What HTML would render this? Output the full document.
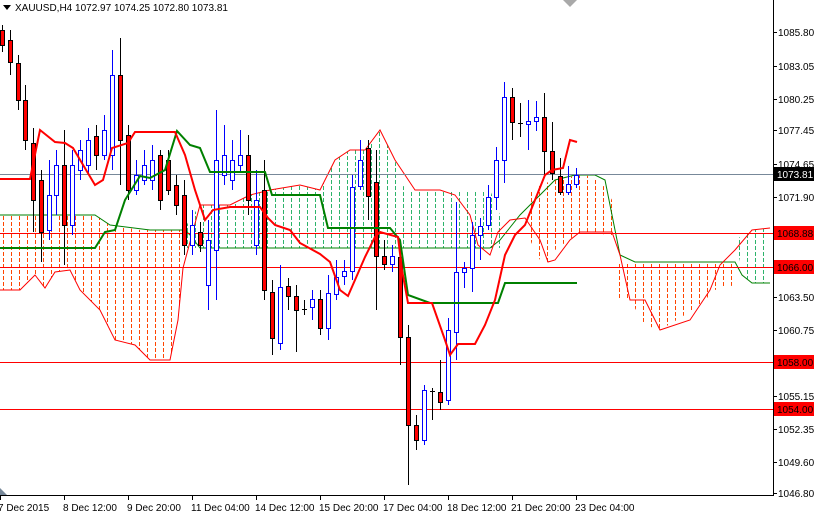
<!DOCTYPE html>
<html><head><meta charset="utf-8"><style>
body{margin:0;width:814px;height:516px;overflow:hidden;background:#fff;font-family:"Liberation Sans",sans-serif}
svg{display:block}
text{font-family:"Liberation Sans",sans-serif;font-size:10px}
</style></head><body>
<svg width="814" height="516" viewBox="0 0 814 516">
<defs>
<clipPath id="co"><polygon points="0,215 95,215 110,225 140,230 183,230 183,268 178,320 170,360 150,360 135,345 115,340 100,310 80,290 70,270 55,272 45,288 35,275 20,290 0,290"/><polygon points="525,195 540,185 560,178 585,175 600,180 612,200 612,235 580,232 555,250 548,262 540,260 530,240"/><polygon points="615,262 640,262 700,262 735,262 735,285 715,290 700,305 680,318 660,330 645,325 630,300 617,300"/></clipPath>
<clipPath id="cg"><polygon points="183,230 200,205 230,205 250,195 270,190 300,185 320,190 335,160 350,150 365,150 380,130 395,160 405,190 490,190 500,215 500,248 183,248"/><polygon points="735,240 752,230 770,228 770,283 750,283 742,270"/></clipPath>
</defs>
<g clip-path="url(#co)"><path fill="none" stroke="#ff4500" stroke-width="1" stroke-dasharray="4,2" d="M3.5 120V370M11.5 120V370M19.5 120V370M27.5 120V370M35.5 120V370M43.5 120V370M51.5 120V370M59.5 120V370M67.5 120V370M75.5 120V370M83.5 120V370M91.5 120V370M99.5 120V370M107.5 120V370M115.5 120V370M123.5 120V370M131.5 120V370M139.5 120V370M147.5 120V370M155.5 120V370M163.5 120V370M171.5 120V370M179.5 120V370M523.5 120V370M531.5 120V370M539.5 120V370M547.5 120V370M555.5 120V370M563.5 120V370M571.5 120V370M579.5 120V370M587.5 120V370M595.5 120V370M603.5 120V370M611.5 120V370M619.5 120V370M627.5 120V370M635.5 120V370M643.5 120V370M651.5 120V370M659.5 120V370M667.5 120V370M675.5 120V370M683.5 120V370M691.5 120V370M699.5 120V370M707.5 120V370M715.5 120V370M723.5 120V370M731.5 120V370"/></g>
<g clip-path="url(#cg)"><path fill="none" stroke="#2db36b" stroke-width="1" stroke-dasharray="4,2" d="M187.5 120V370M195.5 120V370M203.5 120V370M211.5 120V370M219.5 120V370M227.5 120V370M235.5 120V370M243.5 120V370M251.5 120V370M259.5 120V370M267.5 120V370M275.5 120V370M283.5 120V370M291.5 120V370M299.5 120V370M307.5 120V370M315.5 120V370M323.5 120V370M331.5 120V370M339.5 120V370M347.5 120V370M355.5 120V370M363.5 120V370M371.5 120V370M379.5 120V370M387.5 120V370M395.5 120V370M403.5 120V370M411.5 120V370M419.5 120V370M427.5 120V370M435.5 120V370M443.5 120V370M451.5 120V370M459.5 120V370M467.5 120V370M475.5 120V370M483.5 120V370M491.5 120V370M499.5 120V370M739.5 120V370M747.5 120V370M755.5 120V370M763.5 120V370"/></g>
<polyline fill="none" stroke="#008000" stroke-width="1" points="0,215 95,215 110,225 150,230 185,230 190,235 200,248 320,248 330,248 400,248 490,248 500,240 520,215 540,195 555,180 575,175 595,175 605,180 615,230 620,255 635,262 735,262 742,275 752,283 770,283"/>
<polyline fill="none" stroke="#ff0000" stroke-width="1" points="0,290 20,290 35,275 45,288 55,272 70,270 80,290 100,310 115,340 135,345 150,360 170,360 178,320 183,268 200,205 230,205 250,195 270,190 300,185 320,190 335,160 350,150 365,150 380,130 395,160 405,175 415,190 440,190 455,195 470,215 478,245 490,255 498,232 510,220 525,218 540,240 548,262 555,260 570,240 580,232 612,232 620,255 630,300 645,300 660,330 690,320 710,290 720,265 735,250 752,230 770,228"/>
<line x1="0" y1="174.5" x2="773" y2="174.5" stroke="#778899"/>
<line x1="0" y1="233.5" x2="773" y2="233.5" stroke="#f00"/>
<line x1="0" y1="267.5" x2="773" y2="267.5" stroke="#f00"/>
<line x1="0" y1="362.5" x2="773" y2="362.5" stroke="#f00"/>
<line x1="0" y1="409.5" x2="773" y2="409.5" stroke="#f00"/>
<g stroke-width="1">
<g stroke="#000" fill="#f00">
<line x1="2.5" y1="25" x2="2.5" y2="52"/><rect x="0.5" y="30.5" width="4" height="15"/>
<line x1="10.5" y1="30" x2="10.5" y2="75"/><rect x="8.5" y="40.5" width="4" height="22"/>
<line x1="18.5" y1="55" x2="18.5" y2="110"/><rect x="16.5" y="63.5" width="4" height="37"/>
<line x1="25.5" y1="85" x2="25.5" y2="150"/><rect x="23.5" y="100.5" width="4" height="40"/>
<line x1="33.5" y1="128" x2="33.5" y2="232"/><rect x="31.5" y="143.5" width="4" height="57"/>
<line x1="41.5" y1="170" x2="41.5" y2="262"/><rect x="39.5" y="180.5" width="4" height="52"/>
<line x1="64.5" y1="130" x2="64.5" y2="265"/><rect x="62.5" y="165.5" width="4" height="60"/>
<line x1="96.5" y1="125" x2="96.5" y2="170"/><rect x="94.5" y="136.5" width="4" height="19"/>
<line x1="120.5" y1="38" x2="120.5" y2="185"/><rect x="118.5" y="75.5" width="4" height="65"/>
<line x1="128.5" y1="125" x2="128.5" y2="200"/><rect x="126.5" y="135.5" width="4" height="55"/>
<line x1="160.5" y1="150" x2="160.5" y2="210"/><rect x="158.5" y="155.5" width="4" height="45"/>
<line x1="168.5" y1="150" x2="168.5" y2="195"/><rect x="166.5" y="160.5" width="4" height="30"/>
<line x1="176.5" y1="175" x2="176.5" y2="215"/><rect x="174.5" y="185.5" width="4" height="20"/>
<line x1="184.5" y1="180" x2="184.5" y2="255"/><rect x="182.5" y="195.5" width="4" height="50"/>
<line x1="200.5" y1="222" x2="200.5" y2="252"/><rect x="198.5" y="232.5" width="4" height="13"/>
<line x1="248.5" y1="135" x2="248.5" y2="215"/><rect x="246.5" y="155.5" width="4" height="45"/>
<line x1="264.5" y1="160" x2="264.5" y2="300"/><rect x="262.5" y="190.5" width="4" height="100"/>
<line x1="272.5" y1="280" x2="272.5" y2="355"/><rect x="270.5" y="292.5" width="4" height="46"/>
<line x1="288.5" y1="278" x2="288.5" y2="310"/><rect x="286.5" y="286.5" width="4" height="10"/>
<line x1="296.5" y1="285" x2="296.5" y2="352"/><rect x="294.5" y="296.5" width="4" height="14"/>
<line x1="320.5" y1="290" x2="320.5" y2="335"/><rect x="318.5" y="299.5" width="4" height="29"/>
<line x1="368.5" y1="140" x2="368.5" y2="220"/><rect x="366.5" y="148.5" width="4" height="48"/>
<line x1="376.5" y1="150" x2="376.5" y2="310"/><rect x="374.5" y="182.5" width="4" height="74"/>
<line x1="384.5" y1="240" x2="384.5" y2="270"/><rect x="382.5" y="256.5" width="4" height="8"/>
<line x1="400.5" y1="245" x2="400.5" y2="365"/><rect x="398.5" y="257.5" width="4" height="80"/>
<line x1="408.5" y1="325" x2="408.5" y2="485"/><rect x="406.5" y="337.5" width="4" height="88"/>
<line x1="416.5" y1="415" x2="416.5" y2="450"/><rect x="414.5" y="425.5" width="4" height="15"/>
<line x1="440.5" y1="360" x2="440.5" y2="410"/><rect x="438.5" y="392.5" width="4" height="10"/>
<line x1="512.5" y1="88" x2="512.5" y2="140"/><rect x="510.5" y="97.5" width="4" height="25"/>
<line x1="544.5" y1="93" x2="544.5" y2="175"/><rect x="542.5" y="117.5" width="4" height="34"/>
<line x1="552.5" y1="122" x2="552.5" y2="180"/><rect x="550.5" y="151.5" width="4" height="22"/>
<line x1="560.5" y1="158" x2="560.5" y2="195"/><rect x="558.5" y="176.5" width="4" height="16"/>
</g>
<g stroke="#000">
<line x1="304.5" y1="300" x2="304.5" y2="315"/><line x1="302" y1="309.5" x2="307" y2="309.5"/>
<line x1="432.5" y1="388" x2="432.5" y2="420"/><line x1="430" y1="391.5" x2="435" y2="391.5"/>
<line x1="520.5" y1="103" x2="520.5" y2="137"/><line x1="518" y1="123.5" x2="523" y2="123.5"/>
</g>
<g stroke="#00f" fill="#fff">
<line x1="49.5" y1="160" x2="49.5" y2="240"/><rect x="47.5" y="195.5" width="4" height="35"/>
<line x1="56.5" y1="150" x2="56.5" y2="215"/><rect x="54.5" y="165.5" width="4" height="30"/>
<line x1="72.5" y1="150" x2="72.5" y2="235"/><rect x="70.5" y="165.5" width="4" height="60"/>
<line x1="80.5" y1="140" x2="80.5" y2="180"/><rect x="78.5" y="150.5" width="4" height="20"/>
<line x1="88.5" y1="128" x2="88.5" y2="175"/><rect x="86.5" y="140.5" width="4" height="25"/>
<line x1="104.5" y1="115" x2="104.5" y2="160"/><rect x="102.5" y="130.5" width="4" height="25"/>
<line x1="112.5" y1="50" x2="112.5" y2="170"/><rect x="110.5" y="75.5" width="4" height="80"/>
<line x1="136.5" y1="160" x2="136.5" y2="195"/><rect x="134.5" y="175.5" width="4" height="15"/>
<line x1="144.5" y1="150" x2="144.5" y2="185"/><rect x="142.5" y="165.5" width="4" height="15"/>
<line x1="152.5" y1="145" x2="152.5" y2="190"/><rect x="150.5" y="160.5" width="4" height="20"/>
<line x1="192.5" y1="210" x2="192.5" y2="255"/><rect x="190.5" y="225.5" width="4" height="20"/>
<line x1="208.5" y1="220" x2="208.5" y2="310"/><rect x="206.5" y="240.5" width="4" height="45"/>
<line x1="216.5" y1="110" x2="216.5" y2="300"/><rect x="214.5" y="160.5" width="4" height="90"/>
<line x1="224.5" y1="125" x2="224.5" y2="185"/><rect x="222.5" y="155.5" width="4" height="20"/>
<line x1="232.5" y1="140" x2="232.5" y2="190"/><rect x="230.5" y="160.5" width="4" height="20"/>
<line x1="240.5" y1="130" x2="240.5" y2="172"/><rect x="238.5" y="155.5" width="4" height="10"/>
<line x1="256.5" y1="170" x2="256.5" y2="255"/><rect x="254.5" y="200.5" width="4" height="45"/>
<line x1="280.5" y1="265" x2="280.5" y2="350"/><rect x="278.5" y="287.5" width="4" height="56"/>
<line x1="312.5" y1="290" x2="312.5" y2="320"/><rect x="310.5" y="299.5" width="4" height="8"/>
<line x1="328.5" y1="275" x2="328.5" y2="340"/><rect x="326.5" y="293.5" width="4" height="35"/>
<line x1="336.5" y1="260" x2="336.5" y2="300"/><rect x="334.5" y="277.5" width="4" height="17"/>
<line x1="344.5" y1="260" x2="344.5" y2="285"/><rect x="342.5" y="271.5" width="4" height="5"/>
<line x1="352.5" y1="175" x2="352.5" y2="280"/><rect x="350.5" y="187.5" width="4" height="84"/>
<line x1="360.5" y1="140" x2="360.5" y2="190"/><rect x="358.5" y="160.5" width="4" height="26"/>
<line x1="392.5" y1="245" x2="392.5" y2="272"/><rect x="390.5" y="256.5" width="4" height="8"/>
<line x1="424.5" y1="385" x2="424.5" y2="445"/><rect x="422.5" y="390.5" width="4" height="50"/>
<line x1="448.5" y1="318" x2="448.5" y2="405"/><rect x="446.5" y="330.5" width="4" height="70"/>
<line x1="456.5" y1="202" x2="456.5" y2="360"/><rect x="454.5" y="272.5" width="4" height="60"/>
<line x1="464.5" y1="262" x2="464.5" y2="288"/><rect x="462.5" y="268.5" width="4" height="4"/>
<line x1="472.5" y1="222" x2="472.5" y2="292"/><rect x="470.5" y="235.5" width="4" height="33"/>
<line x1="480.5" y1="218" x2="480.5" y2="260"/><rect x="478.5" y="226.5" width="4" height="9"/>
<line x1="488.5" y1="185" x2="488.5" y2="230"/><rect x="486.5" y="197.5" width="4" height="28"/>
<line x1="496.5" y1="147" x2="496.5" y2="210"/><rect x="494.5" y="160.5" width="4" height="37"/>
<line x1="504.5" y1="82" x2="504.5" y2="183"/><rect x="502.5" y="97.5" width="4" height="63"/>
<line x1="528.5" y1="100" x2="528.5" y2="150"/><rect x="526.5" y="121.5" width="4" height="3"/>
<line x1="536.5" y1="101" x2="536.5" y2="131"/><rect x="534.5" y="117.5" width="4" height="4"/>
<line x1="568.5" y1="166" x2="568.5" y2="195"/><rect x="566.5" y="184.5" width="4" height="8"/>
<line x1="576.5" y1="168" x2="576.5" y2="188"/><rect x="574.5" y="175.5" width="4" height="9"/>
</g>
</g>
<polyline fill="none" stroke="#008000" stroke-width="2" points="0,248 95,248 105,232 115,230 125,200 140,176 150,178 165,170 177,131 190,145 200,148 210,172 265,172 272,195 320,195 328,228 390,228 400,240 408,295 430,303 498,303 505,283 577,283"/>
<polyline fill="none" stroke="#f00" stroke-width="2" points="0,179 30,179 40,130 55,142 65,143 73,148 95,185 103,180 112,148 128,143 135,132 175,132 185,155 195,190 205,220 213,210 230,207 260,207 268,218 275,225 290,230 300,243 320,254 330,262 340,290 348,296 355,280 365,257 375,237 380,232 398,237 402,270 408,303 432,303 445,340 450,355 458,344 475,344 485,325 495,300 505,255 515,235 525,225 537,195 545,175 552,170 563,168 570,140 577,142"/>
<line x1="773.5" y1="0" x2="773.5" y2="496" stroke="#000"/>
<line x1="0" y1="495.5" x2="774" y2="495.5" stroke="#000"/>
<polygon points="563,0 577,0 570,7" fill="#a9a9a9"/>
<polygon points="0,488 0,495 7,495" fill="#778899"/>
<g fill="#000">
<g stroke="#000"><line x1="773" y1="32.5" x2="777" y2="32.5"/><line x1="773" y1="66.5" x2="777" y2="66.5"/><line x1="773" y1="99.5" x2="777" y2="99.5"/><line x1="773" y1="130.5" x2="777" y2="130.5"/><line x1="773" y1="164.5" x2="777" y2="164.5"/><line x1="773" y1="197.5" x2="777" y2="197.5"/><line x1="773" y1="297.5" x2="777" y2="297.5"/><line x1="773" y1="330.5" x2="777" y2="330.5"/><line x1="773" y1="396.5" x2="777" y2="396.5"/><line x1="773" y1="429.5" x2="777" y2="429.5"/><line x1="773" y1="462.5" x2="777" y2="462.5"/><line x1="773" y1="493.5" x2="777" y2="493.5"/></g>
<text x="778" y="36">1085.80</text>
<text x="778" y="70">1083.05</text>
<text x="778" y="103">1080.25</text>
<text x="778" y="134">1077.45</text>
<text x="778" y="168">1074.65</text>
<text x="778" y="201">1071.90</text>
<text x="778" y="301">1063.50</text>
<text x="778" y="334">1060.75</text>
<text x="778" y="400">1055.15</text>
<text x="778" y="433">1052.35</text>
<text x="778" y="466">1049.60</text>
<text x="778" y="497">1046.80</text>
</g>
<rect x="774" y="167" width="40" height="14" fill="#000"/><text x="777" y="178" fill="#fff">1073.81</text>
<rect x="774" y="226" width="40" height="14" fill="#f00"/><text x="777" y="237" fill="#000">1068.88</text>
<rect x="774" y="260" width="40" height="14" fill="#f00"/><text x="777" y="271" fill="#000">1066.00</text>
<rect x="774" y="355" width="40" height="14" fill="#f00"/><text x="777" y="366" fill="#000">1058.00</text>
<rect x="774" y="402" width="40" height="14" fill="#f00"/><text x="777" y="413" fill="#000">1054.00</text>
<g stroke="#000"><line x1="0.5" y1="495" x2="0.5" y2="500"/><line x1="64.5" y1="495" x2="64.5" y2="500"/><line x1="128.5" y1="495" x2="128.5" y2="500"/><line x1="192.5" y1="495" x2="192.5" y2="500"/><line x1="256.5" y1="495" x2="256.5" y2="500"/><line x1="320.5" y1="495" x2="320.5" y2="500"/><line x1="384.5" y1="495" x2="384.5" y2="500"/><line x1="448.5" y1="495" x2="448.5" y2="500"/><line x1="512.5" y1="495" x2="512.5" y2="500"/><line x1="576.5" y1="495" x2="576.5" y2="500"/></g>
<g fill="#000">
<text x="-2" y="511">7 Dec 2015</text>
<text x="63" y="511">8 Dec 12:00</text>
<text x="127" y="511">9 Dec 20:00</text>
<text x="191" y="511">11 Dec 04:00</text>
<text x="255" y="511">14 Dec 12:00</text>
<text x="319" y="511">15 Dec 20:00</text>
<text x="383" y="511">17 Dec 04:00</text>
<text x="447" y="511">18 Dec 12:00</text>
<text x="511" y="511">21 Dec 20:00</text>
<text x="575" y="511">23 Dec 04:00</text>
</g>
<polygon points="3,5 11,5 7,10" fill="#000"/>
<text x="15" y="11" fill="#000">XAUUSD,H4  1072.97 1074.25 1072.80 1073.81</text>
</svg>
</body></html>
